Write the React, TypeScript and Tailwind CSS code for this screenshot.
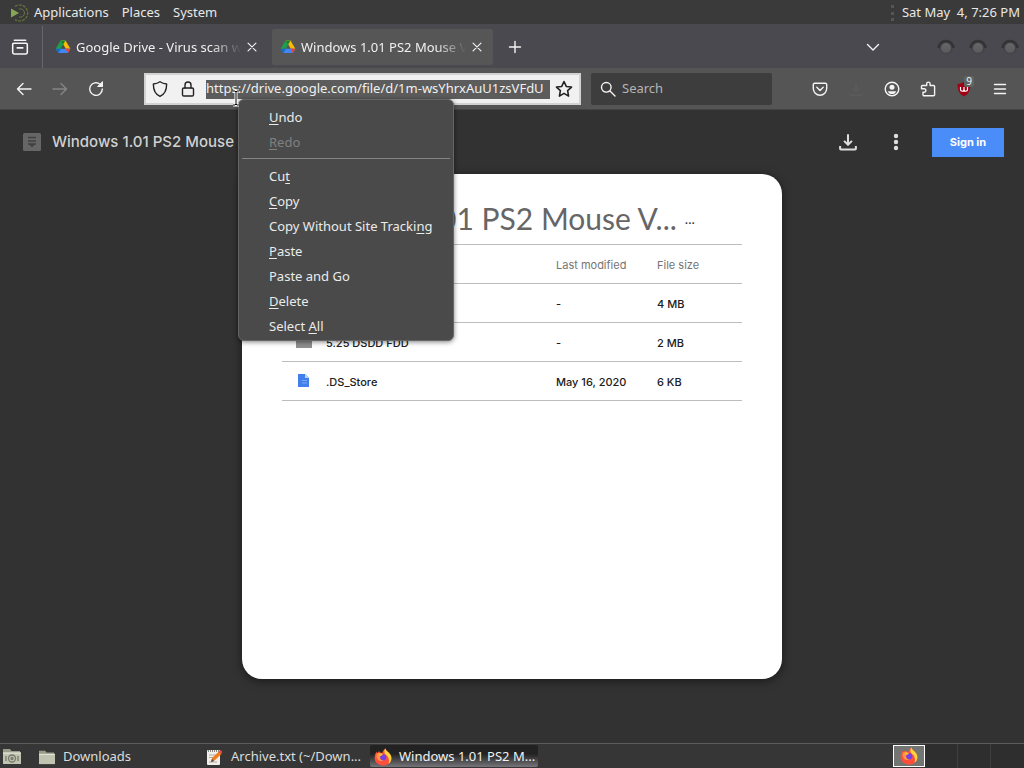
import React from 'react';

const PAGE_TITLE = 'Windows 1.01 PS2 Mouse V...';

const menuItems = [
  { before: '', key: 'U', after: 'ndo' },
  { before: '', key: 'R', after: 'edo', disabled: true, separator: true },
  { before: 'Cu', key: 't', after: '' },
  { before: '', key: 'C', after: 'opy' },
  { before: 'Copy Without Site Tracki', key: 'n', after: 'g' },
  { before: '', key: 'P', after: 'aste' },
  { before: 'Paste and Go', key: '', after: '' },
  { before: '', key: 'D', after: 'elete' },
  { before: 'Select ', key: 'A', after: 'll' },
];

const files = [
  { name: '3.5 DSDD FDD', modified: '-', size: '4 MB', folder: true },
  { name: '5.25 DSDD FDD', modified: '-', size: '2 MB', folder: true },
  { name: '.DS_Store', modified: 'May 16, 2020', size: '6 KB', folder: false },
];

/* ---------- icons ---------- */

function DriveIcon() {
  return (
    <svg viewBox="0 0 16 16" className="w-4 h-4 shrink-0">
      <path d="M5.5 1.5h5L8 5.8 3.2 14 .7 9.8z" fill="#1e9e4a" />
      <path d="M6 1.5h4.500l4.900 8.300h-4.600z" fill="#fbbc04" />
      <path d="M3.2 14l2.5-4.2h9.7L12.9 14z" fill="#4285f4" />
      <path d="M.7 9.8h5L3.2 14z" fill="#1967d2" />
      <path d="M10.4 9.8h5L12.9 14z" fill="#ea4335" />
      <path d="M5.5 1.5h5L8 5.8z" fill="#188038" />
    </svg>
  );
}

function FirefoxIcon() {
  return (
    <svg viewBox="0 0 18 18" className="w-[18px] h-[18px] shrink-0">
      <path d="M11.5.5c.3 1.7 1.3 2.4 2.5 3.6 1.900 1.700 3.400 3.500 3.400 6.200 0 4.200-3.700 7.300-8.200 7.300S.6 14.200.6 9.900c0-2.300.8-4.700 2-6.400l.5 1.900c.6-1.200 1.500-2 2.400-2.400-.2 1 .1 1.600.5 2 .8-.2 1.500-.2 2.200 0C8.800 3.500 9.700 1.400 11.500.5z" fill="#ff4f3c" />
      <path d="M11.500.5c.3 1.700 1.300 2.400 2.500 3.600 1.900 1.700 3.400 3.500 3.400 6.200 0 2.300-1.100 4.200-2.900 5.500 1-3 .7-6.500-2.600-9C10.400 5.700 9.500 3 11.500.5z" fill="#ffd43a" />
      <path d="M3 5.500c2-1 4.500-.9 5.500.9L5.800 8.200c.2 2.500 2 4 4.200 3.700-1 1.800-5.500 1.700-7-1.700-.6-1.500-.5-3.300 0-4.700z" fill="#ff9640" />
      <circle cx="9.300" cy="9.300" r="3.100" fill="#7542e5" />
      <path d="M4.500 6.200c1.800-.8 3.400-.4 4.700.6-1.300.3-1.700 1.200-3 1.400z" fill="#ffb72e" />
    </svg>
  );
}

function FolderIcon({ camera = false }: { camera?: boolean }) {
  return (
    <svg viewBox="0 0 20 18" className={camera ? 'w-5 h-[18px] shrink-0' : 'w-[18px] h-4 shrink-0'}>
      <path d="M1 3.500V2h7l1.500 2H18v2H1z" fill="#9a9d8c" />
      <path d="M1 5.500h18V17H1z" fill="#c0c3b0" />
      <path d="M1 5.500h18v1.200H1z" fill="#e3e5d6" />
      {camera && (
        <g fill="none" stroke="#777a6c" strokeWidth="1.300">
          <circle cx="10" cy="11.500" r="3.500" />
          <circle cx="10" cy="11.500" r="1" />
          <path d="M4 9v5M16 9v5" />
        </g>
      )}
    </svg>
  );
}

function NoteIcon() {
  return (
    <svg viewBox="0 0 18 18" className="w-[18px] h-[18px] shrink-0">
      <rect x="2" y="2" width="13" height="15" rx="1" fill="#f1efe9" />
      <path d="M3 3h11" stroke="#8a8a84" strokeWidth="2" strokeDasharray="1 1" />
      <path d="M4 7h8M4 9.500h6M4 14h8" stroke="#aaa" />
      <path d="M6 14l1-4 7-6.500 2.500 2.500-7 6.500z" fill="#f07c1c" />
      <path d="M13.500 4L15.500 2l2 2-1.500 2z" fill="#e04b4b" />
      <path d="M6 14l1-3 2 2z" fill="#444" />
    </svg>
  );
}

function Icon({ children, size = 'w-4 h-4' }: { children: React.ReactNode; size?: string }) {
  return (
    <svg
      viewBox="0 0 16 16"
      className={`${size} shrink-0`}
      fill="none"
      stroke="currentColor"
      strokeWidth="1.4"
      strokeLinecap="round"
      strokeLinejoin="round"
    >
      {children}
    </svg>
  );
}

/* ---------- desktop panel ---------- */

function TopPanel() {
  return (
    <header className="flex items-center h-6 bg-[#3a3a3a] text-[#e8e8e8] pl-2 pt-px">
      <svg viewBox="0 0 22 18" className="w-[22px] h-[18px] shrink-0" fill="none">
        <path d="M3 4.500v9l8-4.500z" fill="#87a556" />
        <path d="M7 2.500A8 8 0 1 1 7 15.500" stroke="#66763f" strokeWidth="1.200" strokeDasharray="3 1" />
        <path d="M11 5a4.200 4.200 0 1 1 0 8" stroke="#66763f" strokeWidth="1" />
      </svg>
      <nav className="flex gap-[13px] pl-1 pt-px">
        <button type="button">Applications</button>
        <button type="button">Places</button>
        <button type="button">System</button>
      </nav>
      <div className="ml-auto flex items-center gap-2 pr-1 pt-px">
        <span className="w-[3px] h-4 border-l-[3px] border-dotted border-[#555]" />
        <time className="whitespace-pre">Sat May  4, 7:26 PM</time>
      </div>
    </header>
  );
}

/* ---------- browser ---------- */

function Tab({ title, active = false }: { title: string; active?: boolean }) {
  return (
    <div
      className={`flex items-center h-9 w-[221px] pl-2 pr-[9px] rounded-xs ${
        active ? 'bg-[#565656]' : ''
      }`}
    >
      <button type="button" className="flex items-center gap-[5px] flex-1 min-w-0 text-left">
        <DriveIcon />
        <span className="flex-1 min-w-0 overflow-hidden whitespace-nowrap pt-px text-[#f0f0f0] [mask-image:linear-gradient(to_right,#000_82%,transparent)]">
          {title}
        </span>
      </button>
      <button type="button" aria-label="Close tab" className="ml-1 text-[#f0f0f0]">
        <Icon size="w-[14px] h-[14px]">
          <path d="M3.500 3.500l9 9M12.500 3.500l-9 9" />
        </Icon>
      </button>
    </div>
  );
}

function WindowButton({ label }: { label: string }) {
  return (
    <button type="button" aria-label={label}>
      <svg viewBox="0 0 18 18" className="w-[18px] h-[18px]">
        <defs>
          <linearGradient id={label} x1="0" y1="0" x2="0" y2="1">
            <stop offset="0" stopColor="#666" />
            <stop offset="1" stopColor="#5a5a5e" />
          </linearGradient>
        </defs>
        <circle cx="9" cy="9" r="7" fill="#434347" />
        <circle cx="9" cy="10" r="5" fill={`url(#${label})`} />
        <path d="M1.500 10a7.500 7 0 0 1 15 0" fill="none" stroke="#343436" strokeWidth="2.500" />
      </svg>
    </button>
  );
}

function TabBar() {
  return (
    <div className="flex items-center h-11 bg-[#4a494f] text-[#f4f4f4] pt-[2px]">
      <button type="button" aria-label="Firefox View" className="w-[42px] h-full flex justify-center items-center pr-[2px]">
        <Icon size="w-[18px] h-[18px]">
          <path d="M3 2h10M2.500 4.700h11a1 1 0 0 1 1 1v7a1.500 1.500 0 0 1-1.500 1.500H3a1.500 1.500 0 0 1-1.500-1.500v-7a1 1 0 0 1 1-1zM5.500 8.800h5" />
        </Icon>
      </button>
      <span className="w-px h-full bg-[#66666b] mr-1" />
      <div className="flex gap-1">
        <Tab title="Google Drive - Virus scan warning" />
        <Tab title="Windows 1.01 PS2 Mouse VGA" active />
      </div>
      <button type="button" aria-label="New tab" className="ml-[14px]">
        <Icon>
          <path d="M8 2.500v11M2.500 8h11" />
        </Icon>
      </button>
      <button type="button" aria-label="List all tabs" className="ml-auto">
        <Icon>
          <path d="M2.500 5.500L8 11l5.500-5.500" />
        </Icon>
      </button>
      <div className="flex gap-[14px] ml-14 pr-[5px]">
        <WindowButton label="Minimize" />
        <WindowButton label="Maximize" />
        <WindowButton label="Close" />
      </div>
    </div>
  );
}

function Toolbar() {
  return (
    <div className="flex items-center h-[42px] bg-[#555] text-[#f4f4f4] px-4 pt-px border-b border-[#444]">
      <div className="flex items-center gap-5 w-32">
        <button type="button" aria-label="Back">
          <Icon>
            <path d="M15 8H1.500M7 2.500L1.500 8 7 13.500" />
          </Icon>
        </button>
        <button type="button" aria-label="Forward" disabled className="text-[#858585]">
          <Icon>
            <path d="M1 8h13.500M9 2.500L14.500 8 9 13.500" />
          </Icon>
        </button>
        <button type="button" aria-label="Reload">
          <Icon>
            <path d="M14.300 8A6.300 6.300 0 1 1 12 3.200l2 1.800" />
            <path d="M14.500 1v4.500H10z" fill="currentColor" strokeWidth="1" />
          </Icon>
        </button>
      </div>

      <div className="flex items-center flex-1 min-w-0 h-8 bg-[#f1f1f1] border-2 border-[#d2d2d2] text-[#222] px-[6px]">
        <Icon>
          <path d="M8 .8c2 1.400 4 2 6.600 2.200C14.800 9.500 12.600 13.200 8 15.300 3.400 13.200 1.200 9.500 1.400 3 4 2.800 6 2.200 8 .8z" />
        </Icon>
        <span className="ml-3 flex">
          <Icon>
            <rect x="2.500" y="7" width="11" height="8" rx="1.300" />
            <path d="M5 7V4a3 3 0 0 1 6 0v3" />
          </Icon>
        </span>
        <input
          type="text"
          aria-label="Address"
          defaultValue="https://drive.google.com/file/d/1m-wsYhrxAuU1zsVFdU"
          className="ml-[10px] flex-1 min-w-0 h-[19px] bg-[#5c5c5c] text-[#f0f0f0] outline-none"
        />
        <button type="button" aria-label="Bookmark this page" className="ml-[5px]">
          <Icon size="w-[18px] h-[18px]">
            <path d="M8 1.300l2 4.400 4.700.6-3.500 3.200.9 4.800L8 11.900l-4.100 2.400.9-4.800L1.300 6.300 6 5.700z" />
          </Icon>
        </button>
      </div>

      <label className="ml-[10px] flex items-center w-[181px] h-8 bg-[#3d3d3d] rounded-xs pl-[9px] gap-[6px]">
        <Icon>
          <circle cx="6.300" cy="6.300" r="4.800" />
          <path d="M10 10l5 5" />
        </Icon>
        <input
          type="text"
          aria-label="Search"
          placeholder="Search"
          className="w-[140px] bg-transparent outline-none placeholder:text-[#b4b4b4]"
        />
      </label>

      <div className="flex items-center gap-5 ml-10">
        <button type="button" aria-label="Save to Pocket">
          <Icon>
            <path d="M2.500 2.300h11a1.200 1.200 0 0 1 1.200 1.200v4a6.700 6.700 0 0 1-13.400 0v-4a1.200 1.200 0 0 1 1.200-1.200zM4.800 6.300L8 9.400l3.200-3.100" />
          </Icon>
        </button>
        <button type="button" aria-label="Downloads" className="text-[#606060]">
          <Icon>
            <path d="M8 2v8M5 7.500L8 10.500l3-3M2.500 14h11" strokeWidth="1" />
          </Icon>
        </button>
        <button type="button" aria-label="Account">
          <Icon>
            <circle cx="8" cy="8" r="6.800" />
            <circle cx="8" cy="6.200" r="2.500" fill="currentColor" stroke="none" />
            <path d="M3.800 10.200h8.400C11.500 12.300 10 13 8 13s-3.500-.7-4.200-2.800z" fill="currentColor" stroke="none" />
          </Icon>
        </button>
        <button type="button" aria-label="Extensions">
          <Icon>
            <path d="M6.700 4.500V2.800a1.700 1.700 0 0 1 3.400 0v1.700h3.500a1 1 0 0 1 1 1v8.300a1 1 0 0 1-1 1H4a1 1 0 0 1-1-1v-2.600h1.200a1.700 1.700 0 0 0 0-3.400H1.500V5.500a1 1 0 0 1 1-1z" />
          </Icon>
        </button>
        <button type="button" aria-label="uBlock Origin" className="relative">
          <svg viewBox="0 0 16 16" className="w-4 h-4">
            <path d="M8 1c2 1.300 4.300 1.800 6.500 2 0 6-1.500 9.500-6.500 12.500C3 12.500 1.500 9 1.500 3 3.700 2.800 6 2.300 8 1z" fill="#a10014" />
            <path d="M4.500 6v2.500a1.700 1.700 0 0 0 3.500 0V6v2.500a1.700 1.700 0 0 0 3.500 0V6" fill="none" stroke="#fff" strokeWidth="1.200" />
          </svg>
          <span className="absolute -top-[5px] -right-[2px] px-[2px] rounded-xs bg-[#5f6562] text-[10px] leading-[11px]">
            9
          </span>
        </button>
        <button type="button" aria-label="Open menu">
          <Icon>
            <path d="M2.500 3.500h11M2.500 8h11M2.500 12.500h11" />
          </Icon>
        </button>
      </div>
    </div>
  );
}

/* ---------- drive page ---------- */

function ArchiveBadge() {
  return (
    <svg viewBox="0 0 18 18" className="w-[18px] h-[18px] shrink-0">
      <rect width="18" height="18" rx="1.500" fill="#666" />
      <path d="M5 4.500h8M5 8h8M5 11h8" stroke="#404040" strokeWidth="1.500" />
      <path d="M6 11h6l-3 3.500z" fill="#404040" />
    </svg>
  );
}

function DriveHeader() {
  return (
    <div className="flex items-center h-16 pl-[23px] pr-5">
      <ArchiveBadge />
      <h1 className="ml-[11px] w-[186px] overflow-hidden text-[15px] font-medium text-[#d0d0d0] whitespace-nowrap font-['Inter',sans-serif]">
        {PAGE_TITLE}
      </h1>
      <div className="ml-auto flex items-center text-[#dedede]">
        <button type="button" aria-label="Download">
          <Icon size="w-[18px] h-[18px]">
            <path d="M8 1v9M4.500 7L8 10.500 11.500 7M1 11.500V14a.7.7 0 0 0 .7.7h12.600A.7.7 0 0 0 15 14v-2.500" strokeWidth="1.800" strokeLinecap="butt" />
          </Icon>
        </button>
        <button type="button" aria-label="More actions" className="ml-[30px]">
          <svg viewBox="0 0 18 18" className="w-[18px] h-[18px]" fill="currentColor">
            <circle cx="9" cy="3" r="2.200" />
            <circle cx="9" cy="9" r="2.200" />
            <circle cx="9" cy="15" r="2.200" />
          </svg>
        </button>
        <button
          type="button"
          className="ml-[27px] w-[72px] h-[29px] bg-[#4b8df8] text-white text-[11px] font-bold font-['Inter',sans-serif]"
        >
          Sign in
        </button>
      </div>
    </div>
  );
}

function FileList() {
  return (
    <section className="flex-1 w-full max-w-[540px] mb-16 px-10 pt-[18px] bg-white rounded-[20px] shadow-[0_2px_10px_rgba(0,0,0,0.5)]">
      <div className="flex items-center h-[53px] border-b border-[#bdbdbd]">
        <h2 className="text-[30px] text-[#666] whitespace-nowrap">{PAGE_TITLE}</h2>
        <span className="ml-2 text-[14px] text-[#333]">...</span>
      </div>
      <table className="w-full table-fixed text-left text-[11px] text-[#202020] font-['Inter',sans-serif]">
        <thead>
          <tr className="h-[38px] border-b border-[#bdbdbd] text-[#757575]">
            <th className="pl-[43px] pt-[3px] font-normal">Name</th>
            <th className="w-[101px] pt-[3px] font-normal">Last modified</th>
            <th className="w-[85px] pt-[3px] font-normal">File size</th>
          </tr>
        </thead>
        <tbody>
          {files.map((file) => (
            <tr key={file.name} className="h-[39px] border-b border-[#bdbdbd] font-medium">
              <td className="pt-[3px]">
                <div className="flex items-center gap-[14px] pl-[14px]">
                  <svg viewBox="0 0 16 16" className="w-4 h-4">
                    {file.folder ? (
                      <path d="M0 0h6l2 2h8v11H0z" fill="#8f8f8f" />
                    ) : (
                      <>
                        <path d="M2 0h7l4 4v9H2z" fill="#4180ec" />
                        <path d="M9 0v4h4z" fill="#bcd3fb" />
                        <path d="M6 6.500h5M6 9h5" stroke="#79a6f6" />
                      </>
                    )}
                  </svg>
                  {file.name}
                </div>
              </td>
              <td className="pt-[3px]">{file.modified}</td>
              <td className="pt-[3px]">{file.size}</td>
            </tr>
          ))}
        </tbody>
      </table>
    </section>
  );
}

/* ---------- overlays ---------- */

function ContextMenu() {
  return (
    <div
      role="menu"
      className="absolute left-[238px] top-[99px] w-[216px] pt-[5px] pb-px px-[3px] bg-[#4a4a4a] border border-[#666] rounded-md shadow-[0_1px_5px_rgba(0,0,0,0.5)] text-[#ebebeb]"
    >
      {menuItems.map((item) => (
        <React.Fragment key={item.before + item.key + item.after}>
          <button
            type="button"
            role="menuitem"
            disabled={item.disabled}
            className="block w-full h-[25px] pl-[27px] text-left whitespace-nowrap disabled:text-[#808080]"
          >
            {item.before}
            <span className="underline underline-offset-2">{item.key}</span>
            {item.after}
          </button>
          {item.separator && <hr className="mt-[3px] mb-[5px] border-[#858585]" />}
        </React.Fragment>
      ))}
    </div>
  );
}

function TextCursor() {
  return (
    <svg viewBox="0 0 10 18" className="absolute left-[231px] top-[89px] w-[10px] h-[18px]" fill="none">
      <path d="M2 2h2l1 1 1-1h2M5 3v12M2 16h2l1-1 1 1h2" stroke="#fff" strokeWidth="3" />
      <path d="M2 2h2l1 1 1-1h2M5 3v12M2 16h2l1-1 1 1h2" stroke="#000" strokeWidth="1" />
    </svg>
  );
}

/* ---------- taskbar ---------- */

function Taskbar() {
  return (
    <footer className="flex items-center h-[25px] bg-[#363636] border-t border-[#5c5c5c] text-[#dcdcdc] pl-[2px]">
      <button type="button" aria-label="Show desktop" className="w-[31px]">
        <FolderIcon camera />
      </button>
      <button type="button" className="flex items-center gap-[7px] w-[168px] h-full pl-[5px] pt-px">
        <FolderIcon />
        Downloads
      </button>
      <button type="button" className="flex items-center gap-2 w-[169px] h-full pl-1 pt-px">
        <NoteIcon />
        Archive.txt (~/Down...
      </button>
      <button
        type="button"
        className="flex items-center gap-[7px] w-[168px] h-[22px] pl-1 pt-px rounded-xs whitespace-nowrap bg-linear-to-b from-[#222] from-40% to-[#77757a] text-[#f2f2f2]"
      >
        <FirefoxIcon />
        Windows 1.01 PS2 M...
      </button>
      <div className="ml-auto flex h-full items-center">
        <button
          type="button"
          aria-label="Workspace 1"
          className="flex items-center justify-center w-8 h-[22px] border border-white bg-[#737573]"
        >
          <FirefoxIcon />
        </button>
        <span className="w-[33px] h-full border-r border-[#404040] bg-[#2e2e2e]" />
        <span className="w-[33px] h-full border-r border-[#404040] bg-[#2e2e2e]" />
        <span className="w-[33px] h-full bg-[#2e2e2e]" />
      </div>
    </footer>
  );
}

export default function App() {
  return (
    <div className="relative flex flex-col min-h-screen overflow-hidden font-['Noto_Sans',sans-serif] text-[13px]">
      <TopPanel />
      <TabBar />
      <Toolbar />
      <main className="flex flex-col flex-1 bg-[#323232] font-['Lato',sans-serif]">
        <DriveHeader />
        <div className="flex flex-col flex-1 items-center">
          <FileList />
        </div>
      </main>
      <Taskbar />
      <ContextMenu />
      <TextCursor />
    </div>
  );
}
